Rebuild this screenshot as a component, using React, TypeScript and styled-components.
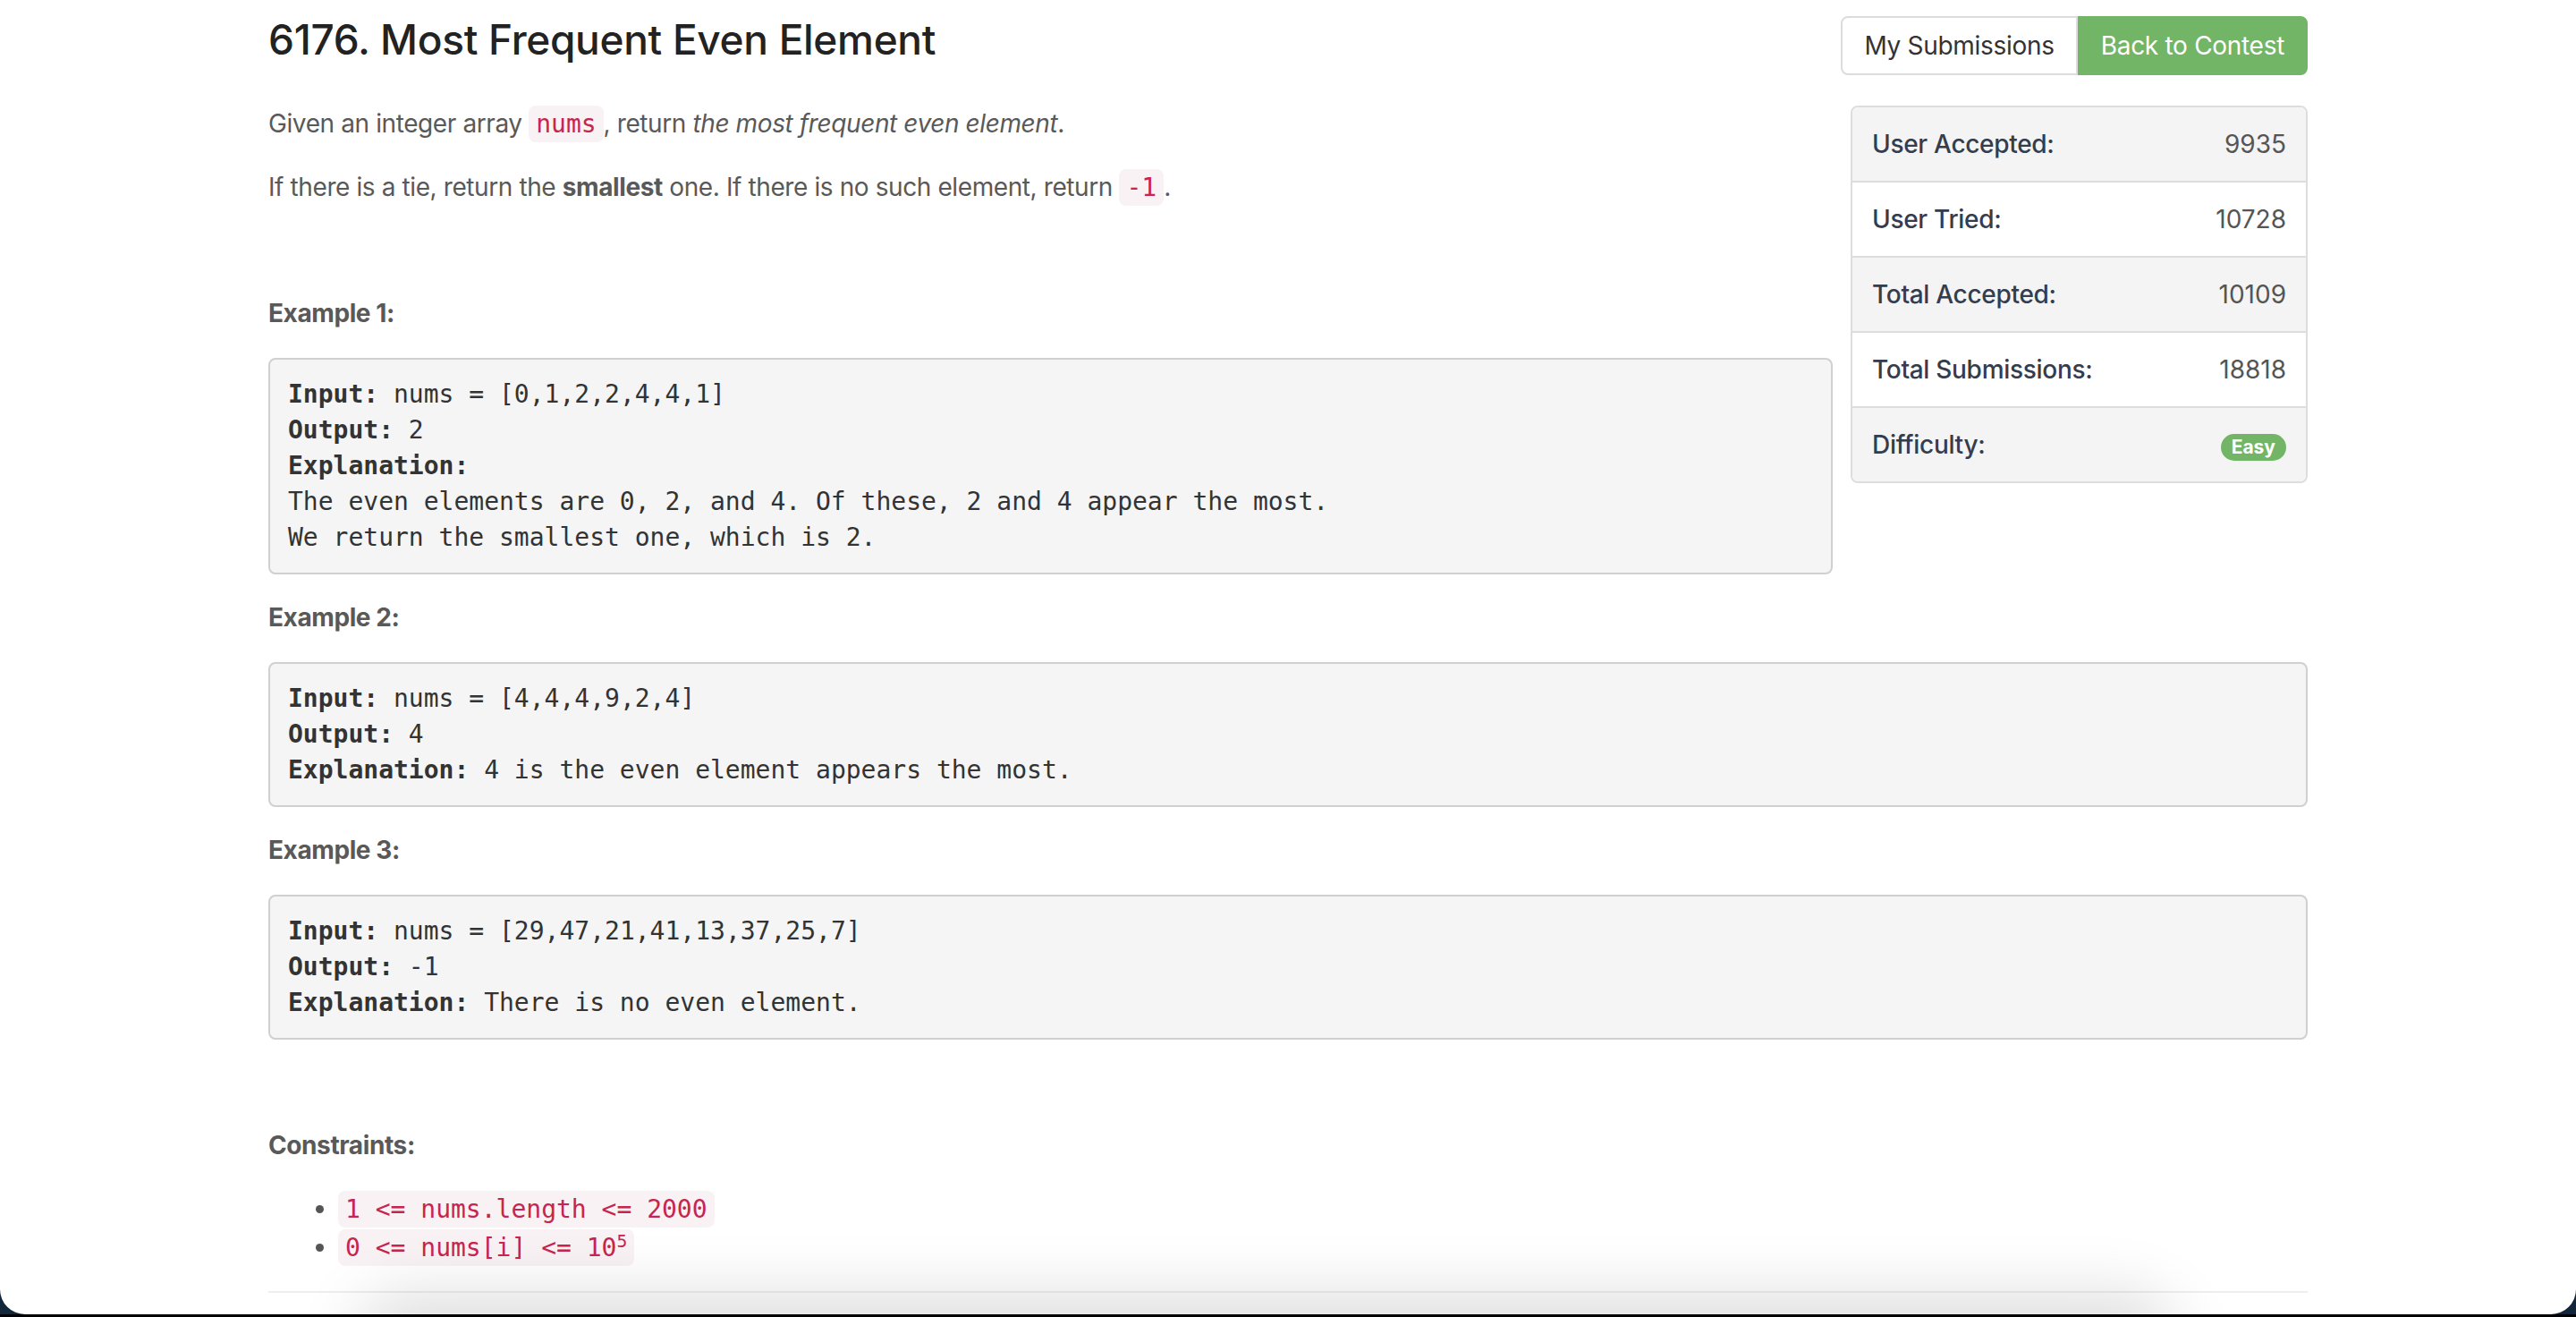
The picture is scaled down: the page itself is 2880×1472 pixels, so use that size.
import React from "react";
import styled, { createGlobalStyle } from "styled-components";

const GlobalStyle = createGlobalStyle`
  html, body {
    margin: 0;
    padding: 0;
  }
  body {
    background: #14263a;
    font-family: Inter, "Noto Sans", "Liberation Sans", sans-serif;
  }
  * { box-sizing: border-box; }
`;

const Desktop = styled.div`
  height: 100vh;
  border-bottom: 3px solid #000;
  background: #14263a;
`;

const Window = styled.div`
  position: relative;
  height: 100%;
  background: #fff;
  border-radius: 0 0 28px 28px;
  overflow: hidden;
`;

const Container = styled.div`
  width: 2280px;
  margin: 0 auto;
  padding-top: 18px;
`;

const Header = styled.div`
  display: flex;
  justify-content: space-between;
  align-items: flex-start;
`;

const Title = styled.h3`
  margin: 0;
  font-family: Inter, "Noto Sans", sans-serif;
  font-weight: 500;
  font-size: 46px;
  line-height: 52px;
  letter-spacing: -0.3px;
  color: #222;
`;

const ButtonGroup = styled.div`
  display: flex;
`;

const Btn = styled.button<{ $primary?: boolean }>`
  height: 66px;
  padding: 0 24px;
  font-family: Inter, "Noto Sans", sans-serif;
  font-size: 28px;
  font-weight: 400;
  letter-spacing: -0.3px;
  cursor: pointer;
  border: 2px solid ${(p) => (p.$primary ? "#72b566" : "#dcdcdc")};
  background: ${(p) => (p.$primary ? "#72b566" : "#fff")};
  color: ${(p) => (p.$primary ? "#fff" : "#333")};
  border-radius: ${(p) => (p.$primary ? "0 8px 8px 0" : "8px 0 0 8px")};
`;

const Content = styled.div`
  margin-top: 34px;
  display: flow-root;
`;

const StatsPanel = styled.div`
  float: right;
  width: 511px;
  margin-left: 20px;
  border: 2px solid #dddddd;
  border-radius: 8px;
  overflow: hidden;
`;

const StatRow = styled.div<{ $striped?: boolean }>`
  display: flex;
  justify-content: space-between;
  align-items: center;
  height: 82px;
  padding: 0 22px;
  background: ${(p) => (p.$striped ? "#f4f4f4" : "#fff")};
  & + & {
    border-top: 2px solid #dddddd;
    height: 84px;
  }
`;

const StatLabel = styled.span`
  font-size: 28px;
  font-weight: 500;
  letter-spacing: -0.3px;
  color: #333d4e;
`;

const StatValue = styled.span`
  font-size: 28px;
  font-weight: 400;
  color: #555;
`;

const Badge = styled.span`
  display: inline-block;
  height: 30px;
  line-height: 30px;
  padding: 0 12px;
  border-radius: 15px;
  background: #72b566;
  color: #fff;
  font-size: 21px;
  font-weight: 700;
`;

const Description = styled.div`
  font-size: 28px;
  line-height: 40px;
  letter-spacing: -0.4px;
  color: #595959;
`;

const P = styled.p`
  margin: 0 0 30px;
`;

const Code = styled.code`
  font-family: "DejaVu Sans Mono", "Liberation Mono", monospace;
  font-size: 28px;
  letter-spacing: 0;
  padding: 4px 8px;
  border-radius: 8px;
  background: #f9f2f4;
  color: #c7254e;
`;

const SectionLabel = styled.strong`
  font-weight: 700;
  color: #595959;
`;

const Pre = styled.pre`
  margin: 0 0 28px;
  padding: 19px 20px;
  overflow: auto;
  font-family: "DejaVu Sans Mono", "Liberation Mono", monospace;
  font-size: 28px;
  line-height: 40px;
  color: #333;
  background: #f5f5f5;
  border: 2px solid #d0d0d0;
  border-radius: 8px;
  white-space: pre-wrap;
  letter-spacing: 0;

  strong {
    font-weight: 700;
  }
`;

const ConstraintList = styled.ul`
  margin: 0;
  padding-left: 78px;

  li {
    line-height: 42px;
  }
  li::marker {
    color: #555;
  }
`;

const Sup = styled.sup`
  font-size: 70%;
  line-height: 0;
`;

const Rule = styled.hr`
  margin: 27px 0 0;
  border: 0;
  border-top: 2px solid #eeeeee;
`;

const BottomShadow = styled.div`
  position: absolute;
  left: 420px;
  width: 1990px;
  bottom: -70px;
  height: 70px;
  border-radius: 40px;
  box-shadow: 0 0 70px 24px rgba(0, 0, 0, 0.13);
  pointer-events: none;
`;

const stats: { label: string; value: React.ReactNode }[] = [
  { label: "User Accepted:", value: "9935" },
  { label: "User Tried:", value: "10728" },
  { label: "Total Accepted:", value: "10109" },
  { label: "Total Submissions:", value: "18818" },
  { label: "Difficulty:", value: <Badge>Easy</Badge> },
];

export default function App() {
  return (
    <>
      <GlobalStyle />
      <Desktop>
        <Window>
          <Container>
            <Header>
              <Title>6176. Most Frequent Even Element</Title>
              <ButtonGroup>
                <Btn>My Submissions</Btn>
                <Btn $primary>Back to Contest</Btn>
              </ButtonGroup>
            </Header>
            <Content>
              <StatsPanel>
                {stats.map((s, i) => (
                  <StatRow key={s.label} $striped={i % 2 === 0}>
                    <StatLabel>{s.label}</StatLabel>
                    <StatValue>{s.value}</StatValue>
                  </StatRow>
                ))}
              </StatsPanel>
              <Description>
                <P>
                  Given an integer array <Code>nums</Code>, return{" "}
                  <em>the most frequent even element</em>.
                </P>
                <P>
                  If there is a tie, return the <strong>smallest</strong> one. If
                  there is no such element, return <Code>-1</Code>.
                </P>
                <P>&nbsp;</P>
                <P>
                  <SectionLabel>Example 1:</SectionLabel>
                </P>
                <Pre>
                  <strong>Input:</strong> nums = [0,1,2,2,4,4,1]{"\n"}
                  <strong>Output:</strong> 2{"\n"}
                  <strong>Explanation:</strong>
                  {"\n"}The even elements are 0, 2, and 4. Of these, 2 and 4 appear the most.
                  {"\n"}We return the smallest one, which is 2.
                </Pre>
                <P>
                  <SectionLabel>Example 2:</SectionLabel>
                </P>
                <Pre>
                  <strong>Input:</strong> nums = [4,4,4,9,2,4]{"\n"}
                  <strong>Output:</strong> 4{"\n"}
                  <strong>Explanation:</strong> 4 is the even element appears the most.
                </Pre>
                <P>
                  <SectionLabel>Example 3:</SectionLabel>
                </P>
                <Pre>
                  <strong>Input:</strong> nums = [29,47,21,41,13,37,25,7]{"\n"}
                  <strong>Output:</strong> -1{"\n"}
                  <strong>Explanation:</strong> There is no even element.
                </Pre>
                <P>&nbsp;</P>
                <P>
                  <SectionLabel>Constraints:</SectionLabel>
                </P>
                <ConstraintList>
                  <li>
                    <Code>1 &lt;= nums.length &lt;= 2000</Code>
                  </li>
                  <li>
                    <Code>
                      0 &lt;= nums[i] &lt;= 10<Sup>5</Sup>
                    </Code>
                  </li>
                </ConstraintList>
              </Description>
              <Rule />
            </Content>
          </Container>
          <BottomShadow />
        </Window>
      </Desktop>
    </>
  );
}
